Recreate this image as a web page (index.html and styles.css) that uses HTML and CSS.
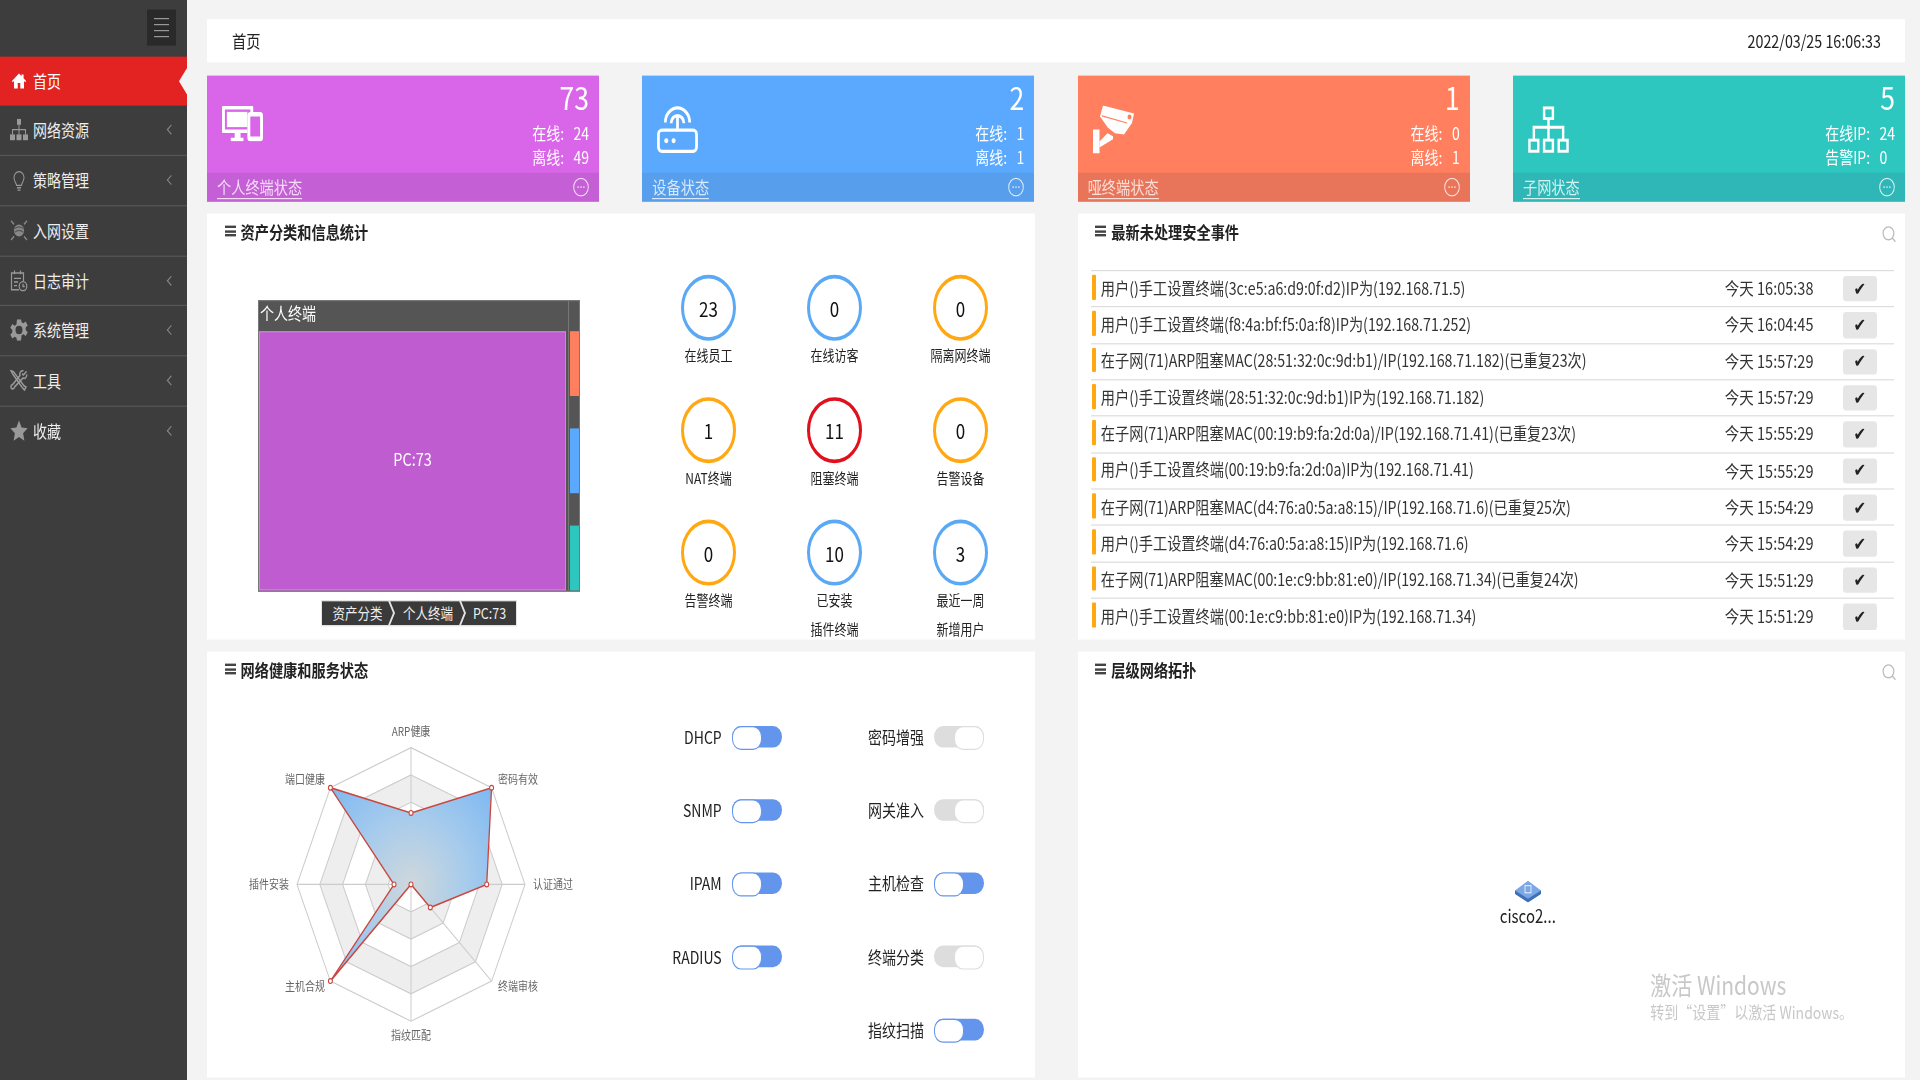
FILE: index.html
```html
<!DOCTYPE html>
<html lang="zh-CN">
<head>
<meta charset="UTF-8" />
<meta name="viewport" content="width=device-width, initial-scale=1" />
<title>首页</title>
<link rel="stylesheet" href="styles.css">
</head>
<body>
<div class="page">

  <aside class="sidebar">
    <div class="side-top">
      <div class="toggle-btn"><span></span><span></span><span></span><span></span></div>
    </div>
    <nav>
      <a class="nav-item active">
        <svg class="nav-icon" viewBox="0 0 18 18"><path fill="#fff" d="M9 1.5 0.5 9l1 1.2L3 9v7.5h4.5V11h3v5.5H15V9l1.500 1.200 1-1.200-3-2.700V2.500h-2.500v1.600z"/></svg>
        <span>首页</span>
      </a>
      <a class="nav-item">
        <svg class="nav-icon" viewBox="0 0 18 18" fill="#999"><rect x="7" y="0" width="4" height="5"/><rect x="0" y="13" width="5" height="5"/><rect x="6.500" y="13" width="5" height="5"/><rect x="13" y="13" width="5" height="5"/><path d="M8.500 5h1v3.500h6.500V13h-1V9.500H9.500V13h-1V9.500H3V13H2V8.500h6.500z"/></svg>
        <span>网络资源</span><i class="chev"></i>
      </a>
      <a class="nav-item">
        <svg class="nav-icon" viewBox="0 0 18 18" fill="none" stroke="#999"><path d="M6.500 13.500c0-2-2.500-3-2.500-6.500a5 5 0 0 1 10 0c0 3.500-2.500 4.500-2.500 6.500z"/><path d="M7 15.500h4M7.500 17.500h3" stroke-width="1.300"/></svg>
        <span>策略管理</span><i class="chev"></i>
      </a>
      <a class="nav-item">
        <svg class="nav-icon" viewBox="0 0 18 18"><circle cx="9" cy="9" r="5" fill="#888"/><path d="M5 7.500c2-2 6-2 8 0M5 10.500c2-2 6-2 8 0" stroke="#555" fill="none"/><path d="M1 1l3 3M17 1l-3 3M1 17l3-3M17 17l-3-3" stroke="#888" stroke-width="1.300"/></svg>
        <span>入网设置</span><i class="chev hidden"></i>
      </a>
      <a class="nav-item">
        <svg class="nav-icon" viewBox="0 0 18 18" fill="none" stroke="#999" stroke-width="1.200"><path d="M9 16.500H1.500V2.500h12v7"/><path d="M4.500 0.500v3M10.500 0.500v3M4 7h7M4 10h4M4 13h3"/><circle cx="13" cy="13.500" r="3.800"/><path d="M13 11.500v2.200h1.800"/></svg>
        <span>日志审计</span><i class="chev"></i>
      </a>
      <a class="nav-item">
        <svg class="nav-icon" viewBox="0 0 18 18"><path fill="#999" fill-rule="evenodd" d="M7 0h4l.6 2.600 1.800.8 2.300-1.400 2 3.200-2 1.700v2.200l2 1.700-2 3.200-2.300-1.400-1.800.8L11 18H7l-.6-2.600-1.800-.8-2.300 1.400-2-3.200 2-1.700V8.900l-2-1.700 2-3.200 2.300 1.400 1.800-.8zM9 5.500a3.500 3.500 0 1 0 0 7 3.500 3.500 0 0 0 0-7z"/></svg>
        <span>系统管理</span><i class="chev"></i>
      </a>
      <a class="nav-item">
        <svg class="nav-icon" viewBox="0 0 18 18" fill="none" stroke="#999" stroke-width="1.400"><path d="M1 1l2.500.8L14 13.500l2 1-1.500 2.500-1.800-1.500L3 4z"/><path d="M16.500 1.500l-3 3-1.500-1M16.800 4c.4 2-1.800 4-3.800 3L4.500 14.500a1.800 1.800 0 1 1-2-2L10 5c-1-2 1-4.500 3.500-4"/></svg>
        <span>工具</span><i class="chev"></i>
      </a>
      <a class="nav-item">
        <svg class="nav-icon" viewBox="0 0 18 18"><path fill="#999" d="M9 0.500l2.600 5.700 6 .7-4.500 4.100 1.300 6.200L9 14.100l-5.400 3.100 1.300-6.200L0.400 6.900l6-.7z"/></svg>
        <span>收藏</span><i class="chev"></i>
      </a>
    </nav>
  </aside>

  <main class="main">
    <header class="topbar">
      <span>首页</span>
      <span>2022/03/25 16:06:33</span>
    </header>

    <section class="cards">
      <div class="card purple">
        <div class="card-body">
          <svg class="card-icon" viewBox="0 0 42 30" fill="#fff">
            <path fill-rule="evenodd" d="M1 0h30a1 1 0 0 1 1 1v21a1 1 0 0 1-1 1H1a1 1 0 0 1-1-1V1a1 1 0 0 1 1-1zm2 3v17h26V3z"/>
            <rect x="5" y="5" width="22" height="13"/>
            <path d="M13 23h6v4h3v3H9v-3h4z"/>
            <path fill="#d966e8" d="M26 5h16v25H26z"/>
            <path fill-rule="evenodd" d="M29 5h10a3 3 0 0 1 3 3v19a3 3 0 0 1-3 3H29a3 3 0 0 1-3-3V8a3 3 0 0 1 3-3zm0 4v17h10V9z"/>
          </svg>
          <div class="card-nums">
            <div class="big">73</div>
            <div class="stats"><div>在线:&nbsp;&nbsp;&nbsp;24</div><div>离线:&nbsp;&nbsp;&nbsp;49</div></div>
          </div>
        </div>
        <div class="card-foot"><a>个人终端状态</a><svg class="more" viewBox="0 0 16 16"><circle cx="8" cy="8" r="7.300"/><path d="M4.500 8h1.200M7.400 8h1.200M10.300 8h1.200" stroke-width="1.500"/></svg></div>
      </div>

      <div class="card blue">
        <div class="card-body">
          <svg class="card-icon" viewBox="0 0 42 40" fill="none" stroke="#fff" stroke-width="2.800">
            <rect x="1.500" y="20.500" width="39" height="18" rx="3.500"/>
            <path d="M21 20.500V7.500"/>
            <path d="M8.500 14a12.500 12.500 0 0 1 25 0"/>
            <path d="M14.500 14.500a6.500 6.500 0 0 1 13 0"/>
            <circle cx="9.500" cy="29.500" r="1.600" fill="#fff" stroke-width="1"/>
            <circle cx="17" cy="29.500" r="1.600" fill="#fff" stroke-width="1"/>
          </svg>
          <div class="card-nums">
            <div class="big">2</div>
            <div class="stats"><div>在线:&nbsp;&nbsp;&nbsp;1</div><div>离线:&nbsp;&nbsp;&nbsp;1</div></div>
          </div>
        </div>
        <div class="card-foot"><a>设备状态</a><svg class="more" viewBox="0 0 16 16"><circle cx="8" cy="8" r="7.300"/><path d="M4.500 8h1.200M7.400 8h1.200M10.300 8h1.200" stroke-width="1.500"/></svg></div>
      </div>

      <div class="card orange">
        <div class="card-body">
          <svg class="card-icon" viewBox="0 0 41 40" fill="#fff">
            <path d="M10 0l31 6.500-2 8-8 9.500-9-1-7-4.500L7 9z"/>
            <path d="M0 20h6.500v20H0z"/>
            <path d="M6.500 30l8-7 5.500 2.500V28L6.500 35z"/>
            <path d="M9 8.500l25 6" stroke="#ff7f5e" fill="none"/>
            <circle cx="36.500" cy="9.500" r="2" fill="#ff7f5e"/>
          </svg>
          <div class="card-nums">
            <div class="big">1</div>
            <div class="stats"><div>在线:&nbsp;&nbsp;&nbsp;0</div><div>离线:&nbsp;&nbsp;&nbsp;1</div></div>
          </div>
        </div>
        <div class="card-foot"><a>哑终端状态</a><svg class="more" viewBox="0 0 16 16"><circle cx="8" cy="8" r="7.300"/><path d="M4.500 8h1.200M7.400 8h1.200M10.300 8h1.200" stroke-width="1.500"/></svg></div>
      </div>

      <div class="card teal">
        <div class="card-body">
          <svg class="card-icon" viewBox="0 0 42 40" fill="none" stroke="#fff" stroke-width="2.500">
            <rect x="16.500" y="1.500" width="9" height="9"/>
            <rect x="1.500" y="29" width="9" height="9.500"/>
            <rect x="16.500" y="29" width="9" height="9.500"/>
            <rect x="31.500" y="29" width="9" height="9.500"/>
            <path d="M21 10.500V29M6 29V18h30v11"/>
          </svg>
          <div class="card-nums">
            <div class="big">5</div>
            <div class="stats"><div>在线IP:&nbsp;&nbsp;&nbsp;24</div><div>告警IP:&nbsp;&nbsp;&nbsp;0</div></div>
          </div>
        </div>
        <div class="card-foot"><a>子网状态</a><svg class="more" viewBox="0 0 16 16"><circle cx="8" cy="8" r="7.300"/><path d="M4.500 8h1.200M7.400 8h1.200M10.300 8h1.200" stroke-width="1.500"/></svg></div>
      </div>
    </section>

    <section class="panels">

      <div class="panel">
        <h3 class="panel-head"><i class="bars"></i>资产分类和信息统计</h3>
        <div class="asset-body">
          <div class="tree-wrap">
            <div class="treemap">
              <div class="tree-left">
                <div class="tree-title">个人终端</div>
                <div class="tree-main">PC:73</div>
              </div>
              <div class="tree-right">
                <div class="leaf leaf-orange"></div>
                <div class="leaf leaf-blue"></div>
                <div class="leaf leaf-teal"></div>
              </div>
            </div>
            <div class="crumbs">
              <span class="crumb first">资产分类</span>
              <span class="crumb">个人终端</span>
              <span class="crumb last">PC:73</span>
            </div>
          </div>
          <div class="stat-grid">
            <div class="stat-cell"><div class="ring c-blue">23</div><p>在线员工</p></div>
            <div class="stat-cell"><div class="ring c-blue">0</div><p>在线访客</p></div>
            <div class="stat-cell"><div class="ring c-amber">0</div><p>隔离网终端</p></div>
            <div class="stat-cell"><div class="ring c-amber">1</div><p>NAT终端</p></div>
            <div class="stat-cell"><div class="ring c-red">11</div><p>阻塞终端</p></div>
            <div class="stat-cell"><div class="ring c-amber">0</div><p>告警设备</p></div>
            <div class="stat-cell"><div class="ring c-amber">0</div><p>告警终端</p></div>
            <div class="stat-cell"><div class="ring c-blue">10</div><p>已安装<br>插件终端</p></div>
            <div class="stat-cell"><div class="ring c-blue">3</div><p>最近一周<br>新增用户</p></div>
          </div>
        </div>
      </div>

      <div class="panel">
        <h3 class="panel-head"><i class="bars"></i>最新未处理安全事件</h3>
        <svg class="search" viewBox="0 0 13 13" fill="none" stroke="#bbb" stroke-width="1.100"><circle cx="6" cy="6" r="5"/><path d="M9.500 9.500l3 3"/></svg>
        <ul class="events">
          <li><i class="flag"></i><span class="ev-text">用户()手工设置终端(3c:e5:a6:d9:0f:d2)IP为(192.168.71.5)</span><span class="ev-time">今天 16:05:38</span><b class="ev-btn">✔</b></li>
          <li><i class="flag"></i><span class="ev-text">用户()手工设置终端(f8:4a:bf:f5:0a:f8)IP为(192.168.71.252)</span><span class="ev-time">今天 16:04:45</span><b class="ev-btn">✔</b></li>
          <li><i class="flag"></i><span class="ev-text">在子网(71)ARP阻塞MAC(28:51:32:0c:9d:b1)/IP(192.168.71.182)(已重复23次)</span><span class="ev-time">今天 15:57:29</span><b class="ev-btn">✔</b></li>
          <li><i class="flag"></i><span class="ev-text">用户()手工设置终端(28:51:32:0c:9d:b1)IP为(192.168.71.182)</span><span class="ev-time">今天 15:57:29</span><b class="ev-btn">✔</b></li>
          <li><i class="flag"></i><span class="ev-text">在子网(71)ARP阻塞MAC(00:19:b9:fa:2d:0a)/IP(192.168.71.41)(已重复23次)</span><span class="ev-time">今天 15:55:29</span><b class="ev-btn">✔</b></li>
          <li><i class="flag"></i><span class="ev-text">用户()手工设置终端(00:19:b9:fa:2d:0a)IP为(192.168.71.41)</span><span class="ev-time">今天 15:55:29</span><b class="ev-btn">✔</b></li>
          <li><i class="flag"></i><span class="ev-text">在子网(71)ARP阻塞MAC(d4:76:a0:5a:a8:15)/IP(192.168.71.6)(已重复25次)</span><span class="ev-time">今天 15:54:29</span><b class="ev-btn">✔</b></li>
          <li><i class="flag"></i><span class="ev-text">用户()手工设置终端(d4:76:a0:5a:a8:15)IP为(192.168.71.6)</span><span class="ev-time">今天 15:54:29</span><b class="ev-btn">✔</b></li>
          <li><i class="flag"></i><span class="ev-text">在子网(71)ARP阻塞MAC(00:1e:c9:bb:81:e0)/IP(192.168.71.34)(已重复24次)</span><span class="ev-time">今天 15:51:29</span><b class="ev-btn">✔</b></li>
          <li><i class="flag"></i><span class="ev-text">用户()手工设置终端(00:1e:c9:bb:81:e0)IP为(192.168.71.34)</span><span class="ev-time">今天 15:51:29</span><b class="ev-btn">✔</b></li>
        </ul>
      </div>

      <div class="panel">
        <h3 class="panel-head"><i class="bars"></i>网络健康和服务状态</h3>
        <div class="health-body">
          <svg class="radar" viewBox="-165 -160 330 320" width="330" height="320">
            <defs>
              <radialGradient id="radarFill" gradientUnits="userSpaceOnUse" cx="0" cy="0" r="114">
                <stop offset="0" stop-color="#cfd8dc"/>
                <stop offset="0.5" stop-color="#a6cbec"/>
                <stop offset="1" stop-color="#7db8f2"/>
              </radialGradient>
            </defs>
            <polygon points="0,-114 80.600,-80.600 114,0 80.600,80.600 0,114 -80.600,80.600 -114,0 -80.600,-80.600" fill="#fff" stroke="#ccc"/>
            <polygon points="0,-91.200 64.500,-64.500 91.200,0 64.500,64.500 0,91.200 -64.500,64.500 -91.200,0 -64.500,-64.500" fill="#eee" stroke="#ccc"/>
            <polygon points="0,-68.400 48.400,-48.400 68.400,0 48.400,48.400 0,68.400 -48.400,48.400 -68.400,0 -48.400,-48.400" fill="#fff" stroke="#ccc"/>
            <polygon points="0,-45.600 32.200,-32.200 45.600,0 32.200,32.200 0,45.600 -32.200,32.200 -45.600,0 -32.200,-32.200" fill="#eee" stroke="#ccc"/>
            <polygon points="0,-22.800 16.100,-16.100 22.800,0 16.100,16.100 0,22.800 -16.100,16.100 -22.800,0 -16.100,-16.100" fill="#fff" stroke="#ccc"/>
            <path d="M0-114V114M-114 0H114M-80.600-80.600 80.600 80.600M80.600-80.600-80.600 80.600" stroke="#ccc"/>
            <polygon points="0,-59.600 80.600,-80.600 75.700,0 19.300,19.300 0,0 -80.600,80.600 -17,0 -80.600,-80.600" fill="url(#radarFill)" stroke="#c9473f" stroke-width="1.300"/>
            <g fill="#fff" stroke="#c9473f">
              <circle cx="0" cy="-59.600" r="2"/><circle cx="80.600" cy="-80.600" r="2"/><circle cx="75.700" cy="0" r="2"/><circle cx="19.300" cy="19.300" r="2"/>
              <circle cx="0" cy="0" r="2"/><circle cx="-80.600" cy="80.600" r="2"/><circle cx="-17" cy="0" r="2"/><circle cx="-80.600" cy="-80.600" r="2"/>
            </g>
            <g class="radar-labels" text-anchor="middle">
              <text x="0" y="-124">ARP健康</text>
              <text x="107" y="-84">密码有效</text>
              <text x="142" y="3.500">认证通过</text>
              <text x="107" y="89">终端审核</text>
              <text x="0" y="130">指纹匹配</text>
              <text x="-106" y="89">主机合规</text>
              <text x="-142" y="3.500">插件安装</text>
              <text x="-106" y="-84">端口健康</text>
            </g>
          </svg>
          <div class="switches">
            <div class="sw-row"><label>DHCP</label><i class="sw on"></i></div>
            <div class="sw-row"><label>密码增强</label><i class="sw"></i></div>
            <div class="sw-row"><label>SNMP</label><i class="sw on"></i></div>
            <div class="sw-row"><label>网关准入</label><i class="sw"></i></div>
            <div class="sw-row"><label>IPAM</label><i class="sw on"></i></div>
            <div class="sw-row"><label>主机检查</label><i class="sw on"></i></div>
            <div class="sw-row"><label>RADIUS</label><i class="sw on"></i></div>
            <div class="sw-row"><label>终端分类</label><i class="sw"></i></div>
            <div class="sw-row sw-last"><label>指纹扫描</label><i class="sw on"></i></div>
          </div>
        </div>
      </div>

      <div class="panel">
        <h3 class="panel-head"><i class="bars"></i>层级网络拓扑</h3>
        <svg class="search" viewBox="0 0 13 13" fill="none" stroke="#bbb" stroke-width="1.100"><circle cx="6" cy="6" r="5"/><path d="M9.500 9.500l3 3"/></svg>
        <div class="topo-node">
          <svg viewBox="0 0 26 18" width="26" height="18">
            <path fill="#3f6fb8" d="M0 8v3l13 7 13-7V8z"/>
            <path fill="#7ba7e4" d="M13 0 26 8 13 15 0 8z"/>
            <rect x="10" y="4" width="6" height="6" fill="none" stroke="#dfe9f7" stroke-width="1"/>
          </svg>
          <span>cisco2...</span>
        </div>
        <div class="activate">
          <div class="act-big">激活 Windows</div>
          <div class="act-small">转到“设置”以激活 Windows。</div>
        </div>
      </div>

    </section>
  </main>
</div>
</body>
</html>
```

FILE: styles.css
```css
* {
  box-sizing: border-box;
}
html, body {
  margin: 0;
  height: 100%;
  overflow: hidden;
  background: #f3f3f3;
}
body {
  font-family: "Noto Sans CJK SC", "Liberation Sans", sans-serif;
  font-size: 14px;
  color: #222;
}

/* the whole screen was captured stretched, 900px tall shown as 1080 */
.page {
  display: flex;
  width: 1920px;
  height: 900px;
  transform: scaleY(1.2);
  transform-origin: 0 0;
}

/* sidebar */
.sidebar {
  width: 187px;
  flex: none;
  background: #3d3d3d;
}
.side-top {
  height: 46.67px;
  padding: 7.5px 0 0 147px;
}
.toggle-btn {
  display: flex;
  flex-direction: column;
  justify-content: center;
  gap: 4px;
  width: 29px;
  height: 30px;
  padding: 0 7px;
  background: #2a2a2a;
}
.toggle-btn span {
  height: 1px;
  background: #999;
}
.nav-item {
  display: flex;
  align-items: center;
  height: 41.75px;
  padding: 0 13px 1px 10px;
  border-bottom: 1px solid #565656;
  color: #eee;
  font-size: 14px;
}
.nav-item:last-child {
  border-bottom: 0;
}
.nav-item.active {
  position: relative;
  background: #e32222;
  color: #fff;
  border-bottom: 0;
}
.nav-item.active::after {
  content: "";
  position: absolute;
  right: 0;
  top: 10px;
  width: 8px;
  height: 22px;
  background: #f3f3f3;
  clip-path: polygon(100% 0, 0 50%, 100% 100%);
}
.nav-icon {
  width: 18px;
  height: 18px;
  flex: none;
  margin-right: 5px;
}
.nav-item.active .nav-icon {
  height: 15px;
}
.nav-item span {
  flex: 1;
}
.chev {
  width: 6px;
  height: 6px;
  margin-left: 2px;
  border-left: 1px solid #888;
  border-bottom: 1px solid #888;
  transform: rotate(45deg);
}
.chev.hidden {
  visibility: hidden;
}

/* main column */
.main {
  width: 1698px;
  margin-left: 20px;
  padding-top: 15.8px;
}
.topbar {
  display: flex;
  justify-content: space-between;
  align-items: center;
  height: 36.5px;
  padding: 0 24px 1.5px 25px;
  background: #fff;
  font-size: 14.3px;
}

/* status cards */
.cards {
  display: grid;
  grid-template-columns: repeat(4, 392px);
  column-gap: 43.33px;
  margin-top: 10.5px;
}
.card {
  height: 105.3px;
  color: #fff;
}
.card-body {
  display: flex;
  justify-content: space-between;
  height: 81px;
  padding: 0 10px 0 15px;
}
.card-icon {
  width: 41px;
  height: 40px;
  margin-top: 25.5px;
}
.purple .card-icon {
  height: 30px;
}
.card-nums {
  display: flex;
  flex-direction: column;
  align-items: flex-end;
}
.big {
  font-size: 26.500px;
  line-height: 36px;
}
.stats {
  font-size: 14px;
  line-height: 20.4px;
  margin-top: 2px;
}
.card-foot {
  display: flex;
  justify-content: space-between;
  align-items: center;
  height: 24.3px;
  padding: 0 10px;
  font-size: 14.2px;
  color: #f4dcf7;
}
.card-foot a {
  line-height: 17px;
  border-bottom: 1px solid currentColor;
  margin-top: 3px;
}
.more {
  width: 16px;
  height: 16px;
  fill: none;
  stroke: currentColor;
}
.purple { background: #d966e8; }
.purple .card-foot { background: #c45fd5; }
.blue { background: #5ba9ff; }
.blue .card-foot { background: #579fec; color: #d8e9fb; }
.orange { background: #ff7f5e; }
.orange .card-foot { background: #e8745a; color: #fbdfd8; }
.teal { background: #2ec7c0; }
.teal .card-foot { background: #2fb6b6; color: #d5f2f1; }

/* panels */
.panels {
  display: grid;
  grid-template-columns: 827.5px 827.5px;
  column-gap: 43.33px;
  row-gap: 10px;
  margin-top: 10.3px;
}
.panel {
  position: relative;
  height: 355px;
  background: #fff;
  overflow: hidden;
}
.panel-head {
  display: flex;
  align-items: center;
  height: 30px;
  margin: 0;
  padding: 0 0 1.5px 17.5px;
  font-size: 14.2px;
  font-weight: bold;
}
.bars {
  width: 11px;
  height: 9px;
  margin-right: 5px;
  border-top: 2px solid #444;
  border-bottom: 2px solid #444;
  position: relative;
}
.bars::after {
  content: "";
  position: absolute;
  left: 0;
  right: 0;
  top: 1.5px;
  height: 2px;
  background: #444;
}
.search {
  position: absolute;
  right: 9px;
  top: 10px;
  width: 14px;
  height: 14px;
}

/* asset treemap */
.asset-body {
  display: flex;
}
.tree-wrap {
  width: 322px;
  margin: 41.7px 0 0 51px;
}
.treemap {
  display: flex;
  height: 242.5px;
  background: #555;
  border: 1px solid #777;
}
.tree-left {
  display: flex;
  flex-direction: column;
  width: 310px;
  border-right: 1px solid #777;
}
.tree-title {
  height: 24.5px;
  padding-left: 1px;
  line-height: 21px;
  color: #fff;
  font-size: 14px;
}
.tree-main {
  flex: 1;
  display: flex;
  align-items: center;
  justify-content: center;
  margin-right: 2px;
  padding-bottom: 5px;
  background: #bf5dd0;
  border: 1px solid #c987d4;
  color: #fff;
  font-size: 14.5px;
}
.tree-right {
  flex: 1;
  display: flex;
  flex-direction: column;
  justify-content: space-between;
  padding: 24.5px 0 0 1px;
}
.leaf {
  height: 54px;
}
.leaf-orange { background: #ff7f5e; }
.leaf-blue { background: #5ba9ff; }
.leaf-teal { background: #2ec7c0; }
.crumbs {
  display: flex;
  width: 196px;
  height: 22.5px;
  margin: 7px 0 0 63px;
  padding: 1px;
  background: #e4e4e4;
}
.crumb {
  display: flex;
  align-items: center;
  justify-content: center;
  width: 74px;
  height: 100%;
  margin-right: -3px;
  padding-left: 2px;
  background: #3a3a3a;
  color: #eee;
  font-size: 12.5px;
  clip-path: polygon(0 0, calc(100% - 5px) 0, 100% 50%, calc(100% - 5px) 100%, 0 100%, 5px 50%);
}
.crumb.first {
  width: 71px;
  padding-left: 0;
  clip-path: polygon(0 0, calc(100% - 5px) 0, 100% 50%, calc(100% - 5px) 100%, 0 100%);
}
.crumb.last {
  flex: 1;
  margin-right: 0;
  clip-path: polygon(0 0, 100% 0, 100% 100%, 0 100%, 5px 50%);
}

/* stat rings */
.stat-grid {
  display: grid;
  grid-template-columns: repeat(3, 126px);
  grid-auto-rows: 101.6px;
  margin: 21px 0 0 65.5px;
}
.stat-cell {
  display: flex;
  flex-direction: column;
  align-items: center;
}
.stat-cell p {
  margin: 0;
  font-size: 12px;
  line-height: 24px;
  color: #222;
  text-align: center;
}
.ring {
  display: flex;
  flex: none;
  align-items: center;
  justify-content: center;
  width: 55px;
  height: 55px;
  border: 3px solid;
  border-radius: 50%;
  font-size: 17px;
  color: #111;
}
.c-blue { border-color: #5ba9f5; }
.c-amber { border-color: #ffa812; }
.c-red { border-color: #e0101c; }

/* event list */
.events {
  list-style: none;
  margin: 16.7px 11px 0 13px;
  padding: 0;
}
.events li {
  display: flex;
  align-items: center;
  height: 30.35px;
  border-top: 1px solid #ddd;
  color: #333;
}
.flag {
  width: 4px;
  height: 20.5px;
  margin: 0 5px 3px 1px;
  background: #ffa812;
  border-radius: 1px;
}
.ev-text {
  flex: 1;
  padding-bottom: 2.5px;
  font-size: 14.2px;
  white-space: nowrap;
}
.ev-time {
  width: 118px;
  padding-bottom: 2.5px;
  font-size: 14.500px;
}
.ev-btn {
  display: flex;
  align-items: center;
  justify-content: center;
  width: 34px;
  height: 21.4px;
  margin-right: 17.5px;
  background: #e6e6e6;
  border-radius: 3px;
  color: #222;
  font-size: 15px;
  font-family: "DejaVu Sans", sans-serif;
}

/* radar and switches */
.health-body {
  display: flex;
}
.radar {
  flex: none;
  margin: 3.6px 0 0 39px;
}
.radar-labels {
  font-size: 10px;
  fill: #666;
}
.switches {
  display: grid;
  grid-template-columns: repeat(2, 202.3px);
  grid-auto-rows: 60.8px;
  margin: 10.7px 0 0 3.4px;
}
.sw-row {
  display: flex;
  align-items: center;
  justify-content: flex-end;
  gap: 10px;
  font-size: 14px;
  color: #222;
}
.sw-last {
  grid-column: 2;
}
.sw {
  position: relative;
  width: 50px;
  height: 18px;
  border-radius: 9px;
  background: #ddd;
}
.sw::after {
  content: "";
  position: absolute;
  right: 0;
  top: 0;
  width: 28px;
  height: 18px;
  border: 1px solid #ddd;
  border-radius: 9px;
  background: #fff;
}
.sw.on {
  background: #6495ed;
}
.sw.on::after {
  left: 0;
  right: auto;
  border-color: #6495ed;
}

/* topology */
.topo-node {
  position: absolute;
  left: 420px;
  top: 191px;
  display: flex;
  flex-direction: column;
  align-items: center;
  width: 60px;
  font-size: 15px;
  line-height: 21px;
}
.activate {
  position: absolute;
  left: 572.5px;
  top: 264px;
  color: #c8c8c8;
  white-space: nowrap;
}
.act-big {
  font-size: 21px;
  line-height: 26px;
}
.act-small {
  font-size: 14px;
  line-height: 21px;
}
```
